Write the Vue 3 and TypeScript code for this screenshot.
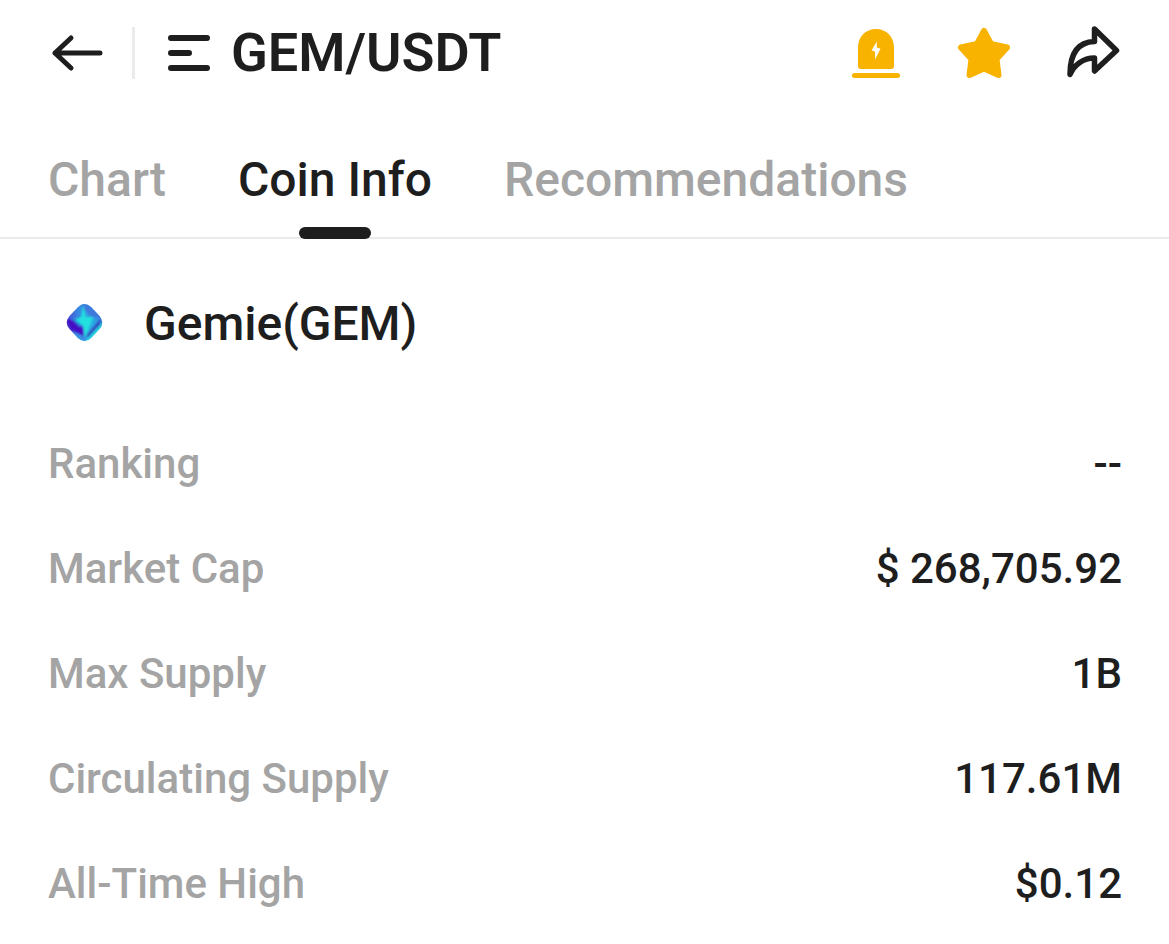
<script setup lang="ts">
import { ref } from 'vue'

interface InfoRow {
  label: string
  value: string
}

const tabs: string[] = ['Chart', 'Coin Info', 'Recommendations']
const activeTab = ref<string>('Coin Info')

const rows: InfoRow[] = [
  { label: 'Ranking', value: '--' },
  { label: 'Market Cap', value: '$ 268,705.92' },
  { label: 'Max Supply', value: '1B' },
  { label: 'Circulating Supply', value: '117.61M' },
  { label: 'All-Time High', value: '$0.12' },
]
</script>

<template>
  <main class="screen">
    <header class="topbar">
      <button class="icon-button" type="button" aria-label="Back">
        <svg width="56" height="56" viewBox="0 0 56 56" fill="none" stroke="currentColor" stroke-width="5" stroke-linecap="round" stroke-linejoin="round">
          <path d="M52 28H7M23 13L7 28L23 43" />
        </svg>
      </button>
      <span class="divider"></span>
      <button class="pair" type="button">
        <svg width="42" height="42" viewBox="0 0 42 42" fill="none" stroke="currentColor" stroke-width="6" stroke-linecap="round">
          <path d="M3 6H39M3 21H21M3 36H39" />
        </svg>
        <span class="pair-name">GEM/USDT</span>
      </button>
      <div class="actions">
        <button class="icon-button gold" type="button" aria-label="Price alert">
          <svg width="56" height="56" viewBox="0 0 56 56" fill="currentColor">
            <path fill-rule="evenodd" d="M10 22.500C10 12 17.500 4 28 4S46 12 46 22.500V41Q46 44 43 44H13Q10 44 10 41ZM28.800 16.500L23.500 25.500L27 26.500V34.500L32.500 23.800L28.800 22.500Z" />
            <rect x="4" y="48" width="48" height="5" rx="2.500" />
          </svg>
        </button>
        <button class="icon-button gold" type="button" aria-label="Favorite">
          <svg width="56" height="56" viewBox="0 0 56 56" fill="currentColor" stroke="currentColor" stroke-width="6" stroke-linejoin="round">
            <path d="M28 6L35 19L51 22.500L40.500 34L42.500 50L28 43.500L13.500 50L15.500 34L5 22.500L21 19Z" />
          </svg>
        </button>
        <button class="icon-button" type="button" aria-label="Share">
          <svg width="56" height="56" viewBox="0 0 56 56" fill="none" stroke="currentColor" stroke-width="5.500" stroke-linecap="round" stroke-linejoin="round">
            <path d="M30.500 4L52.500 25.500L30.500 46V33C19 33 10 40 6 49.500C6 30 13 17 30.500 16.500Z" />
          </svg>
        </button>
      </div>
    </header>

    <nav class="tabs">
      <button
        v-for="tab in tabs"
        :key="tab"
        type="button"
        class="tab"
        :class="{ active: tab === activeTab }"
        @click="activeTab = tab"
      >
        {{ tab }}
      </button>
    </nav>

    <section class="coin">
      <svg class="coin-logo" width="72" height="72" viewBox="0 0 72 72" aria-hidden="true">
        <defs>
          <linearGradient id="gem-body" x1="0" y1="0.600" x2="1" y2="0.400">
            <stop offset="0" stop-color="#4a2cd0" />
            <stop offset="0.350" stop-color="#3a80e0" />
            <stop offset="0.700" stop-color="#2ba8e4" />
            <stop offset="1" stop-color="#4068dc" />
          </linearGradient>
          <clipPath id="gem-clip">
            <path d="M30 19Q36.500 13 43 19L51.500 28Q57 34.500 51.500 41L43 50Q36.500 56 30 50L21.500 41Q16 34.500 21.500 28Z" />
          </clipPath>
          <filter id="gem-soft" x="-20%" y="-20%" width="140%" height="140%">
            <feGaussianBlur stdDeviation="1" />
          </filter>
        </defs>
        <g clip-path="url(#gem-clip)">
          <rect x="16" y="14" width="42" height="42" fill="url(#gem-body)" />
          <g filter="url(#gem-soft)">
            <path d="M30 14L46 18L54 30L43 29Z" fill="#4078dc" />
            <path d="M17 31L25 32L36 39V48L23 42Z" fill="#4410c4" />
            <path d="M22 29L35 35L32 39Z" fill="#248fe0" />
            <path d="M53 31L38 48L41 49L52 38Z" fill="#3038b8" />
            <path d="M35 17L38 29L45 29L43 36L37 50L35 38L27 31L33 29Z" fill="#20e0e0" />
            <path d="M56 33L55 39L42 53L36 54L48 41Z" fill="#20d8e4" />
            <path d="M24 44L32 48L38 54L29 54Z" fill="#349ce8" />
          </g>
        </g>
      </svg>
      <h1 class="coin-name">Gemie(GEM)</h1>
    </section>

    <dl class="info">
      <div v-for="row in rows" :key="row.label" class="info-row">
        <dt>{{ row.label }}</dt>
        <dd>{{ row.value }}</dd>
      </div>
    </dl>
  </main>
</template>

<style>
body {
  margin: 0;
  background: #fff;
}
</style>

<style scoped>
.screen {
  color: #1e1e1e;
  font-family: Roboto, "Liberation Sans", sans-serif;
  font-weight: 500;
}

button {
  padding: 0;
  border: 0;
  background: none;
  color: inherit;
  font: inherit;
  cursor: pointer;
}

svg {
  display: block;
}

.topbar {
  display: flex;
  align-items: center;
  height: 106px;
  padding: 0 49px 0 48px;
}

.divider {
  width: 3px;
  height: 52px;
  margin: 0 33px 0 28px;
  background: #ebebeb;
}

.pair {
  display: flex;
  align-items: center;
  gap: 21px;
}

.pair-name {
  font-size: 54px;
  line-height: 64px;
  font-weight: 600;
}

.actions {
  display: flex;
  gap: 52px;
  margin-left: auto;
}

.gold {
  color: #f8b200;
}

.tabs {
  display: flex;
  gap: 72px;
  height: 131px;
  padding: 0 48px;
  border-bottom: 2px solid #ebebeb;
}

.tab {
  position: relative;
  padding-top: 16px;
  color: #a4a4a4;
  font-size: 48px;
  line-height: 56px;
}

.tab.active {
  color: #1e1e1e;
}

.tab.active::after {
  content: "";
  position: absolute;
  bottom: -2px;
  left: 50%;
  width: 72px;
  height: 12px;
  margin-left: -36px;
  border-radius: 6px;
  background: #1e1e1e;
}

.coin {
  display: flex;
  align-items: center;
  gap: 24px;
  height: 170px;
  padding: 0 48px;
}

.coin-name {
  margin: 0;
  font-size: 48px;
  line-height: 56px;
  font-weight: 500;
}

.info {
  margin: 0;
  padding: 2px 47px 0 48px;
}

.info-row {
  display: flex;
  align-items: center;
  justify-content: space-between;
  height: 105px;
  font-size: 42px;
  line-height: 48px;
}

.info-row dt {
  color: #a4a4a4;
}

.info-row dd {
  margin: 0;
}
</style>
